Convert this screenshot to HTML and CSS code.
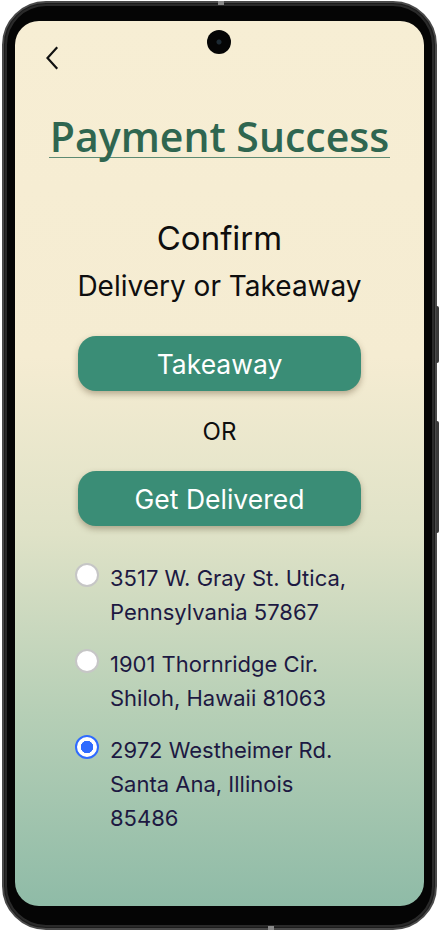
FILE: index.html
```html
<!DOCTYPE html>
<html lang="en">
<head>
<meta charset="utf-8">
<title>Payment Success</title>
<link rel="stylesheet" href="styles.css">
</head>
<body>
<div class="phone">
  <span class="side-key key-top"></span>
  <span class="side-key key-bottom"></span>
  <span class="seam seam-top"></span>
  <span class="seam seam-bottom"></span>
  <div class="screen">
    <span class="camera"></span>
    <header class="topbar">
      <svg class="back" width="14" height="24" viewBox="0 0 14 24" aria-label="Back">
        <path d="M11.5 2 L2.5 12 L11.5 22" fill="none" stroke="#111" stroke-width="2.2" stroke-linecap="square" stroke-linejoin="miter"/>
      </svg>
    </header>
    <div class="title-wrap"><h1 class="title">Payment Success</h1></div>
    <div class="confirm">
      <p class="confirm-main">Confirm</p>
      <p class="confirm-sub">Delivery or Takeaway</p>
    </div>
    <div class="choices">
      <button class="action">Takeaway</button>
      <p class="or">OR</p>
      <button class="action">Get Delivered</button>
    </div>
    <ul class="addresses">
      <li class="address">
        <span class="radio"></span>
        <span class="addr-text">3517 W. Gray St. Utica, Pennsylvania 57867</span>
      </li>
      <li class="address">
        <span class="radio"></span>
        <span class="addr-text">1901 Thornridge Cir. Shiloh, Hawaii 81063</span>
      </li>
      <li class="address">
        <span class="radio checked"></span>
        <span class="addr-text">2972 Westheimer Rd. Santa Ana, Illinois 85486</span>
      </li>
    </ul>
  </div>
</div>
</body>
</html>
```

FILE: styles.css
```css
* { box-sizing: border-box; }

html, body {
  margin: 0;
  padding: 0;
  background: #ffffff;
}

body {
  width: 441px;
  height: 932px;
  padding: 1px 0 0 2px;
  font-family: "Inter", "Liberation Sans", sans-serif;
}

.phone {
  position: relative;
  width: 435px;
  height: 929px;
  border-radius: 44px;
  background: #050505;
  border: 2px solid #4a4a4a;
  box-shadow: inset 0 0 0 1px #1c1c1c, inset 0 0 0 3px #2a2a2a;
  padding: 18px 11px 22px 11px;
}

.side-key {
  position: absolute;
  right: -4px;
  width: 3px;
  background: #3a3a3a;
  border-radius: 0 2px 2px 0;
}
.key-top { top: 303px; height: 57px; }
.key-bottom { top: 418px; height: 112px; }

.seam {
  position: absolute;
  width: 6px;
  height: 4px;
  background: #8a8a8a;
}
.seam-top { top: -2px; left: 214px; }
.seam-bottom { bottom: -2px; left: 264px; }

.screen {
  position: relative;
  width: 100%;
  height: 100%;
  border-radius: 24px;
  overflow: hidden;
  padding: 26px 0 0 0;
  background: linear-gradient(180deg, #f7eed4 0%, #f5ecd2 38%, #dfe2c7 58%, #b6cfb6 78%, #8fbba7 100%);
}

.camera {
  position: absolute;
  top: 9px;
  left: 192px;
  width: 24px;
  height: 24px;
  border-radius: 50%;
  background: radial-gradient(circle at 50% 50%, #1d2a33 0 2px, #050505 3px);
}

.topbar {
  height: 22px;
  padding-left: 30px;
  display: flex;
  align-items: center;
}
.back { display: block; }

.title-wrap {
  margin-top: 46px;
  text-align: center;
}
.title {
  display: inline-block;
  margin: 0;
  font-family: "Open Sans", "Noto Sans", sans-serif;
  font-weight: 600;
  font-size: 41px;
  line-height: 42px;
  color: #2f6650;
  border-bottom: 1px solid #5d8a72;
  padding: 0 1px;
}

.confirm {
  margin-top: 60px;
  text-align: center;
  color: #0e0e0e;
}
.confirm-main {
  margin: 0;
  font-size: 33px;
  line-height: 40px;
}
.confirm-sub {
  margin: 8px 0 0 0;
  font-size: 28px;
  line-height: 40px;
}

.choices {
  margin-top: 30px;
  display: flex;
  flex-direction: column;
  align-items: center;
}
.action {
  width: 283px;
  height: 55px;
  border: none;
  border-radius: 18px;
  background: #3a8d76;
  color: #ffffff;
  font-family: "Inter", "Liberation Sans", sans-serif;
  font-size: 26.5px;
  box-shadow: 0 3px 6px rgba(70, 50, 20, 0.35);
  padding: 0;
}
.or {
  margin: 0;
  height: 80px;
  line-height: 82px;
  font-size: 24px;
  color: #0e0e0e;
}

.addresses {
  list-style: none;
  margin: 35px 0 0 0;
  padding: 0 0 0 60px;
  display: flex;
  flex-direction: column;
  gap: 18px;
}
.address {
  display: flex;
  align-items: flex-start;
  gap: 11px;
}
.radio {
  flex: none;
  width: 24px;
  height: 24px;
  margin-top: 2px;
  border-radius: 50%;
  background: #ffffff;
  border: 2px solid #c6c6c6;
}
.radio.checked {
  border: 2px solid #2f6bff;
  background: radial-gradient(circle, #2f6bff 0 6px, #ffffff 6.5px);
}
.addr-text {
  width: 250px;
  font-size: 22px;
  line-height: 34px;
  color: #1d1942;
}
```
